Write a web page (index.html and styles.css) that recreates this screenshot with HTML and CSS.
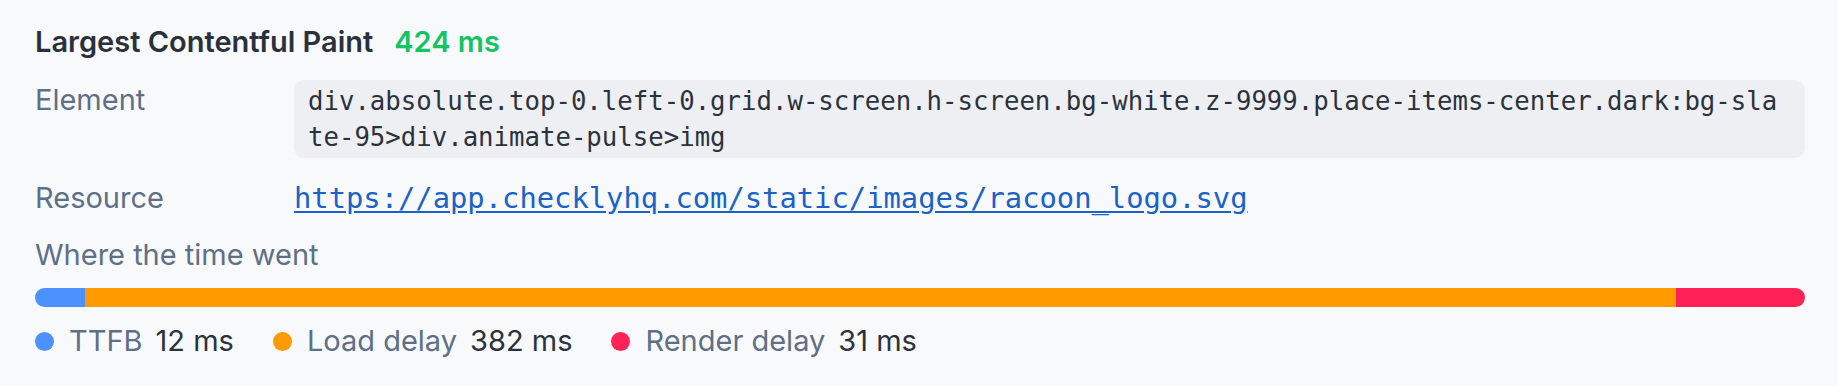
FILE: index.html
```html
<!DOCTYPE html>
<html lang="en">
<head>
<meta charset="utf-8">
<title>Largest Contentful Paint</title>
<link rel="stylesheet" href="styles.css">
</head>
<body>
<section class="lcp">
  <header class="lcp-head">
    <h2 class="lcp-title">Largest Contentful Paint</h2>
    <span class="lcp-value">424 ms</span>
  </header>
  <dl class="lcp-details">
    <dt class="lcp-label">Element</dt>
    <dd class="lcp-field"><code class="lcp-code">div.absolute.top-0.left-0.grid.w-screen.h-screen.bg-white.z-9999.place-items-center.dark:bg-slate-95&gt;div.animate-pulse&gt;img</code></dd>
    <dt class="lcp-label">Resource</dt>
    <dd class="lcp-field"><a class="lcp-link" href="https://app.checklyhq.com/static/images/racoon_logo.svg">https://app.checklyhq.com/static/images/racoon_logo.svg</a></dd>
  </dl>
  <div class="lcp-section">Where the time went</div>
  <div class="lcp-bar">
    <span class="lcp-seg seg-ttfb" style="width:2.82%"></span>
    <span class="lcp-seg seg-load" style="width:89.88%"></span>
    <span class="lcp-seg seg-render" style="width:7.30%"></span>
  </div>
  <ul class="lcp-legend">
    <li class="lcp-item"><span class="lcp-dot seg-ttfb"></span><span class="lcp-item-label">TTFB</span><span class="lcp-item-value">12 ms</span></li>
    <li class="lcp-item"><span class="lcp-dot seg-load"></span><span class="lcp-item-label">Load delay</span><span class="lcp-item-value">382 ms</span></li>
    <li class="lcp-item"><span class="lcp-dot seg-render"></span><span class="lcp-item-label">Render delay</span><span class="lcp-item-value">31 ms</span></li>
  </ul>
</section>
</body>
</html>
```

FILE: styles.css
```css
html, body {
  margin: 0;
  padding: 0;
  background: #f8f9fb;
}

body {
  font-family: "Inter", "Noto Sans", sans-serif;
  font-size: 29px;
  color: #2b323d;
}

.lcp {
  padding: 22px 33px 0 35px;
}

.lcp-head {
  display: flex;
  align-items: baseline;
  gap: 21px;
  line-height: 40px;
  height: 40px;
}

.lcp-title {
  margin: 0;
  font-size: 29px;
  font-weight: 600;
  color: #2a313c;
}

.lcp-value {
  font-weight: 600;
  color: #14c364;
}

.lcp-details {
  margin: 18px 0 0;
  display: grid;
  grid-template-columns: 259px 1fr;
  row-gap: 20px;
  align-items: start;
}

.lcp-label {
  padding-top: 2px;
  line-height: 36px;
  color: #5e6f87;
}

.lcp-field {
  margin: 0;
  min-width: 0;
}

.lcp-code {
  display: block;
  padding: 3px 14px;
  border-radius: 10px;
  background: #edeff2;
  font-family: "DejaVu Sans Mono", "Liberation Mono", monospace;
  font-size: 25.7px;
  line-height: 36px;
  color: #2b323d;
  word-break: break-all;
}

.lcp-link {
  display: block;
  padding-top: 2px;
  font-family: "DejaVu Sans Mono", "Liberation Mono", monospace;
  font-size: 28.8px;
  line-height: 36px;
  color: #1a62c7;
  text-decoration: underline;
  text-underline-offset: 3px;
}

.lcp-section {
  margin-top: 21px;
  line-height: 36px;
  color: #5e6f87;
}

.lcp-bar {
  margin-top: 15px;
  display: flex;
  height: 19px;
  border-radius: 10px;
  overflow: hidden;
}

.lcp-seg {
  display: block;
  height: 100%;
}

.seg-ttfb { background: #4b92ff; }
.seg-load { background: #ff9a00; }
.seg-render { background: #ff2257; }

.lcp-legend {
  margin: 16px 0 0;
  padding: 0;
  list-style: none;
  display: flex;
  gap: 39px;
  line-height: 36px;
}

.lcp-item {
  display: flex;
  align-items: center;
  gap: 13px;
}

.lcp-dot {
  width: 19px;
  height: 19px;
  border-radius: 50%;
  margin-right: 2px;
}

.lcp-item-label {
  color: #5e6f87;
}

.lcp-item-value {
  color: #2b323d;
}
```
